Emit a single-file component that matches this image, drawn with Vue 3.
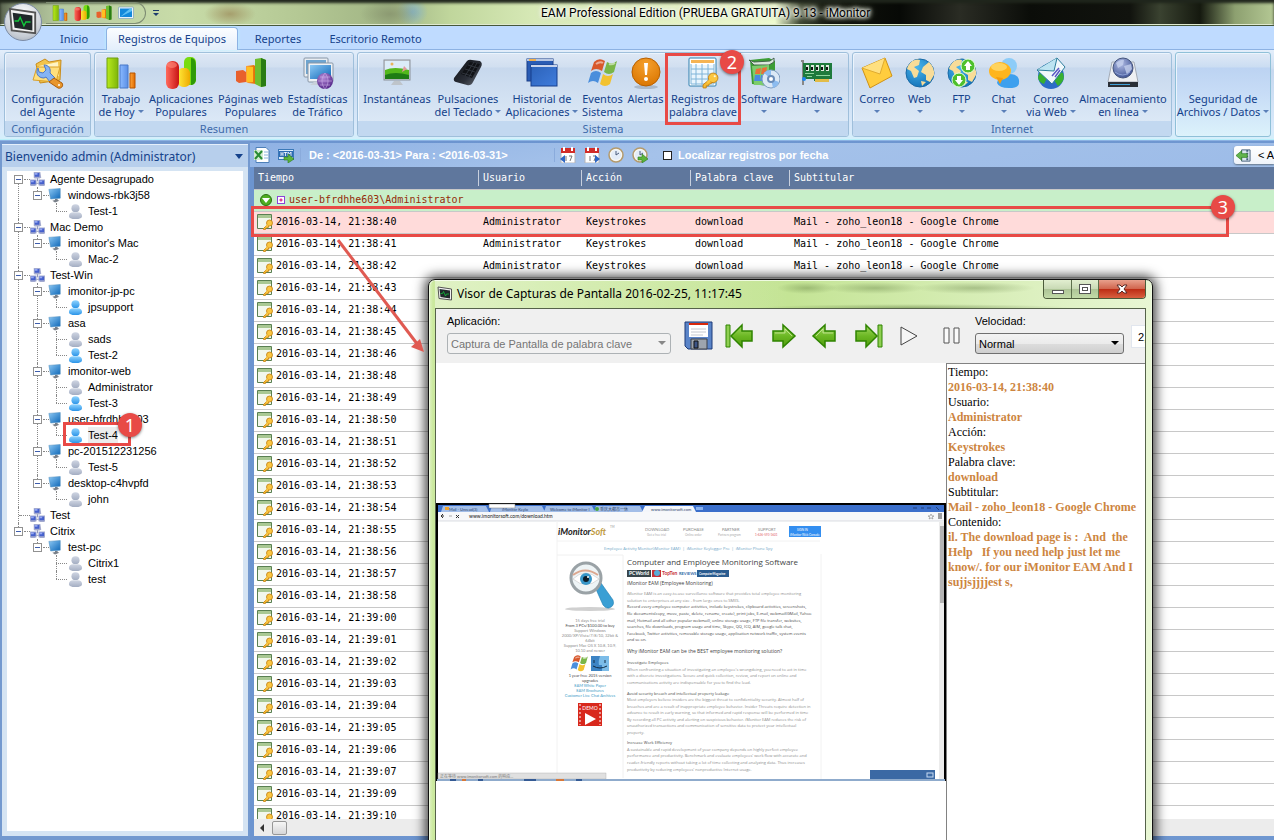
<script setup>
const quickIcons = ['i-bars', 'i-pills', 'i-steps', 'i-desktop']

const tabs = [
  { label: 'Inicio', cls: 'w-inicio' },
  { label: 'Registros de Equipos', cls: 'w-registros', active: true },
  { label: 'Reportes', cls: 'w-reportes' },
  { label: 'Escritorio Remoto', cls: 'w-remoto' }
]

const groups = [
  { label: 'Configuración', cls: 'g1', items: [{ icon: 'i-config', lines: ['Configuración', 'del Agente'], w: 84 }] },
  {
    label: 'Resumen', cls: 'g2', items: [
      { icon: 'i-bars', lines: ['Trabajo', 'de Hoy'], drop: true, w: 48 },
      { icon: 'i-pills', lines: ['Aplicaciones', 'Populares'], w: 72 },
      { icon: 'i-steps', lines: ['Páginas web', 'Populares'], w: 67 },
      { icon: 'i-stats', lines: ['Estadísticas', 'de Tráfico'], w: 67 }
    ]
  },
  {
    label: 'Sistema', cls: 'g3', items: [
      { icon: 'i-snap', lines: ['Instantáneas'], w: 72 },
      { icon: 'i-keyboard', lines: ['Pulsaciones', 'del Teclado'], drop: true, w: 70 },
      { icon: 'i-windows2', lines: ['Historial de', 'Aplicaciones'], drop: true, w: 78 },
      { icon: 'i-win', lines: ['Eventos', 'Sistema'], w: 43 },
      { icon: 'i-alert', lines: ['Alertas'], w: 43 },
      { icon: 'i-gridkey', lines: ['Registros de', 'palabra clave'], w: 72 },
      { icon: 'i-software', lines: ['Software', ''], drop: true, w: 50 },
      { icon: 'i-hardware', lines: ['Hardware', ''], drop: true, w: 56 }
    ]
  },
  {
    label: 'Internet', cls: 'g4', items: [
      { icon: 'i-mail', lines: ['Correo', ''], drop: true, w: 43 },
      { icon: 'i-globe', lines: ['Web', ''], drop: true, w: 42 },
      { icon: 'i-ftp', lines: ['FTP', ''], drop: true, w: 42 },
      { icon: 'i-chat', lines: ['Chat', ''], drop: true, w: 42 },
      { icon: 'i-webmail', lines: ['Correo', 'via Web'], drop: true, w: 53 },
      { icon: 'i-storage', lines: ['Almacenamiento', 'en línea'], drop: true, w: 91 }
    ]
  },
  { label: '', cls: 'g5', items: [{ icon: '', lines: ['Seguridad de', 'Archivos / Datos'], drop: true, w: 94 }] }
]

const tree = [
  { name: 'Agente Desagrupado', computers: [{ name: 'windows-rbk3j58', users: [['Test-1', 0]] }] },
  { name: 'Mac Demo', computers: [{ name: "imonitor's Mac", users: [['Mac-2', 0]] }] },
  {
    name: 'Test-Win', computers: [
      { name: 'imonitor-jp-pc', users: [['jpsupport', 1]] },
      { name: 'asa', users: [['sads', 0], ['Test-2', 1]] },
      { name: 'imonitor-web', users: [['Administrator', 0], ['Test-3', 1]] },
      { name: 'user-bfrdhhe603', users: [['Test-4', 1, 1]] },
      { name: 'pc-201512231256', users: [['Test-5', 0]] },
      { name: 'desktop-c4hvpfd', users: [['john', 0]] }
    ]
  },
  { name: 'Test', computers: [] },
  { name: 'Citrix', computers: [{ name: 'test-pc', users: [['Citrix1', 0], ['test', 0]] }] }
]

const times = ['38:40', '38:41', '38:42', '38:43', '38:44', '38:45', '38:46', '38:48', '38:49', '38:50', '38:51', '38:52', '38:53', '38:54', '38:55', '38:56', '38:57', '38:58', '39:00', '39:01', '39:02', '39:03', '39:04', '39:05', '39:06', '39:07', '39:09', '39:10']

const details = [
  ['Tiempo:', '2016-03-14, 21:38:40'],
  ['Usuario:', 'Administrator'],
  ['Acción:', 'Keystrokes'],
  ['Palabra clave:', 'download'],
  ['Subtitular:', 'Mail - zoho_leon18 - Google Chrome'],
  ['Contenido:', 'il. The download page is :  And  the Help   If you need help just let me know/. for our iMonitor EAM And I sujjsjjjjest s,']
]

const site = [
  [92, 'l', 'iMonitor EAM is an easy-to-use surveillance software that provides total employee monitoring'],
  [99, 'l', 'solution to enterprises at any size - from large ones to SMES.'],
  [105, 'd', 'Record every employee computer activities, include keystrokes, clipboard activities, screenshots,'],
  [112, 'd', 'file documents(copy, move, paste, delete, rename, create), print jobs, E-mail, webmail(GMail, Yahoo'],
  [119, 'd', 'mail, Hotmail and all other popular webmail), online storage usage, FTP file transfer, websites,'],
  [125, 'd', 'searches, file downloads, program usage and time, Skype, QQ, ICQ, AIM, google talk chat,'],
  [132, 'd', 'Facebook, Twitter activities, removable storage usage, application network traffic, system events'],
  [138, 'd', 'and so on.'],
  [161, 'd', 'Investigate Employees'],
  [168, 'l', "When confronting a situation of investigating an employee's wrongdoing, you need to act in time"],
  [174, 'l', 'with a discrete investigations. Secure and quick collection, review, and report on online and'],
  [181, 'l', 'communications activity are indispensable for you to find the lead.'],
  [192, 'd', 'Avoid security breach and intellectual property leakage'],
  [198, 'l', 'Most employers believe insiders are the biggest threat to confidentiality security. Almost half of'],
  [205, 'l', 'breaches and are a result of inappropriate employee behavior. Insider Threats require detection in'],
  [211, 'l', 'advance to result in early warning, so that informed and rapid response will be performed in time'],
  [218, 'l', 'By recording all PC activity and alerting on suspicious behavior. iMonitor EAM reduces the risk of'],
  [224, 'l', 'unauthorized transactions and communication of sensitive data to protect your intellectual'],
  [231, 'l', 'property.'],
  [241, 'd', 'Increase Work Efficiency'],
  [248, 'l', 'A sustainable and rapid development of your company depends on highly perfect employee'],
  [254, 'l', "performance and productivity. Benchmark and evaluate employees' work flow with accurate and"],
  [261, 'l', 'reader-friendly reports without taking a lot of time collecting and analyzing data. Thus increases'],
  [268, 'l', "productivity by reducing employees' nonproductive Internet usage."]
]
const siteSide = [
  [119, 'l', '15 days free trial'], [124, 'd', 'From 3 PCs/$100.00 to buy'], [129, 'l', 'Support Windows'],
  [134, 'l', '2000/XP/Vista/7/8/10, 32bit &'], [139, 'l', '64bit'], [144, 'l', 'Support Mac OS X 10.8, 10.9,'], [149, 'l', '10.10 and newer'],
  [174, 'd', '1 year free 2015 version'], [179, 'd', 'upgrades'], [184, 'b', 'EAM White Paper'], [189, 'b', 'EAM Brochures'], [194, 'b', 'Customer Live Chat Archives']
]
</script>

<template>
  <div class="app">
    <svg class="defs" aria-hidden="true">
      <defs>
        <linearGradient id="gGreen" x1="0" x2="1"><stop offset="0" stop-color="#b8ea1c" /><stop offset="1" stop-color="#7fb60a" /></linearGradient>
        <linearGradient id="gBlue" x1="0" x2="1"><stop offset="0" stop-color="#8ab9ff" /><stop offset="1" stop-color="#5a8fe6" /></linearGradient>
        <linearGradient id="gOrange" x1="0" x2="1"><stop offset="0" stop-color="#ffa53a" /><stop offset="1" stop-color="#e06a00" /></linearGradient>
        <linearGradient id="gRed" x1="0" x2="1"><stop offset="0" stop-color="#ff6a5c" /><stop offset="1" stop-color="#c81414" /></linearGradient>
        <linearGradient id="gYel" x1="0" x2="1"><stop offset="0" stop-color="#ffe93a" /><stop offset="1" stop-color="#eeaa00" /></linearGradient>
        <linearGradient id="gNavy" x1="0" x2="1" y2="1"><stop offset="0" stop-color="#2c62b8" /><stop offset="1" stop-color="#3f7cdc" /></linearGradient>
        <linearGradient id="gScreen" x1="0" x2="1" y2="1"><stop offset="0" stop-color="#8cc8f4" /><stop offset="1" stop-color="#0d67b8" /></linearGradient>
        <linearGradient id="gKeys" x1="0" x2="1" y2="1"><stop offset="0" stop-color="#0c0e12" /><stop offset=".6" stop-color="#2b2f38" /><stop offset="1" stop-color="#6c727c" /></linearGradient>
        <radialGradient id="gAlert" cx=".5" cy=".25" r=".8"><stop offset="0" stop-color="#f5a02c" /><stop offset="1" stop-color="#d97400" /></radialGradient>
        <radialGradient id="gGlobe" cx=".4" cy=".3" r=".8"><stop offset="0" stop-color="#48b4ec" /><stop offset="1" stop-color="#0f6db4" /></radialGradient>
        <radialGradient id="gPurple" cx=".4" cy=".3" r=".8"><stop offset="0" stop-color="#b48ad8" /><stop offset="1" stop-color="#4a1c80" /></radialGradient>
        <radialGradient id="gBall" cx=".4" cy=".3" r=".8"><stop offset="0" stop-color="#b0bce4" /><stop offset="1" stop-color="#34488c" /></radialGradient>
        <linearGradient id="gArrow" x2="0" y2="1"><stop offset="0" stop-color="#a4d864" /><stop offset=".5" stop-color="#6cb824" /><stop offset="1" stop-color="#4f9c0c" /></linearGradient>
        <linearGradient id="gUser" x2="0" y2="1"><stop offset="0" stop-color="#8fd4ff" /><stop offset="1" stop-color="#2a94e8" /></linearGradient>
        <linearGradient id="gUserOff" x2="0" y2="1"><stop offset="0" stop-color="#cfd5e2" /><stop offset="1" stop-color="#a3adc2" /></linearGradient>
      </defs>
      <symbol id="i-bars" viewBox="0 0 32 32"><path d="M2 1h11v30H2z" fill="url(#gGreen)" stroke="#6f9f10" /><path d="M15 8h8v23h-8z" fill="url(#gBlue)" stroke="#4878c8" /><path d="M25 16h5v15h-5z" fill="url(#gOrange)" stroke="#b85400" /></symbol>
      <symbol id="i-pills" viewBox="0 0 32 32"><rect x="19" y="0" width="12" height="28" rx="5" fill="#78dc10" /><path d="M26 1c6 1 5 6 5 22-1 4-3 5-5 5z" fill="#2e9a08" /><rect x="13" y="11" width="12" height="19" rx="5" fill="url(#gYel)" /><rect x="1" y="4" width="13" height="28" rx="6" fill="url(#gRed)" /><ellipse cx="7" cy="8" rx="5" ry="3" fill="#ff8a7c" opacity=".6" /></symbol>
      <symbol id="i-steps" viewBox="0 0 32 32"><path d="M1 14l7-1 3 2v10l-7 1-3-2z" fill="#e8602c" /><path d="M11 9l8-1 2 2v17l-8-1-2-1z" fill="url(#gOrange)" /><path d="M12 10h6v15h-6z" fill="#ffc020" /><path d="M20 2l6-1 5 2v26l-5 1-6-3z" fill="#6fbe30" /><path d="M26 1l5 2v26l-5 1z" fill="#2a7c14" /></symbol>
      <symbol id="i-desktop" viewBox="0 0 32 32"><rect x="1" y="4" width="30" height="23" rx="2" fill="#e8f2fa" stroke="#5d86ac" /><rect x="4" y="7" width="24" height="17" fill="#1389dc" /><path d="M4 24L24 7h4v5z" fill="#5fc0f4" /></symbol>
      <symbol id="i-config" viewBox="0 0 32 32"><path d="M4 7l9-5 4 3 12-2-1 20-20 3z" fill="#f2c44c" stroke="#c98c1c" /><path d="M7 9l19-4 1 14-17 4z" fill="#fff4c4" /><path d="M1 23l4-13 23 0-4 15z" fill="#ffdf7c" stroke="#d9a028" /><path d="M6 11c-3 5 0 10 6 10l2-1 4 5 5-4-5-5c1-4-1-8-6-8l2 5-3 3-4-1z" fill="#86b4f4" stroke="#4c78c8" /><path d="M17 25l5-4 8 5c2 3-1 6-4 5z" fill="#e8962c" stroke="#ac5c08" /><circle cx="27" cy="28" r="1" fill="#fff" /></symbol>
      <symbol id="i-stats" viewBox="0 0 32 32"><rect x="2" y="1" width="24" height="19" rx="1" fill="#e8edf2" stroke="#8896a6" /><rect x="4" y="3" width="20" height="14" fill="#6ea4cf" /><rect x="6" y="6" width="25" height="19" rx="1" fill="#eef2f6" stroke="#8896a6" /><rect x="8" y="8" width="21" height="14" fill="url(#gScreen)" /><path d="M8 28h14l-3-3h-7z" fill="#c9d1da" /><circle cx="23" cy="24" r="8" fill="url(#gPurple)" /><path d="M16 24h14M18 20h10M18 28h10M23 16c-4 5-4 11 0 16M23 16c4 5 4 11 0 16" fill="none" stroke="#cdb0ea" stroke-width=".6" /></symbol>
      <symbol id="i-snap" viewBox="0 0 32 32"><rect x="3" y="3" width="26" height="20" fill="#d4d8dc" stroke="#8b9199" /><rect x="4" y="4" width="24" height="18" fill="#dcecf8" /><path d="M4 13q9-4 24 0v9H4z" fill="#53b81c" /><path d="M4 18q10-4 24 0v4H4z" fill="#1e7c14" /><path d="M23 9l3 3-5 3z" fill="#e29a9a" /><circle cx="11" cy="7" r="1.500" fill="#e8b45c" /><path d="M13 24h6l3 4H10z" fill="#bec4ca" /></symbol>
      <symbol id="i-keyboard" viewBox="0 0 32 32"><path d="M2 21L15 4q2-2 5-1l8 1q3 2 1 6l-8 15q-2 4-6 3L4 25q-3-1-2-4z" fill="url(#gKeys)" /><path d="M9 17L18 5l10 2-8 14z" fill="#101216" /><path d="M10 16l10 3M13 12l10 3M16 8l10 3M13 19l9-14M17 20l8-14" stroke="#3c424c" stroke-width=".7" /></symbol>
      <symbol id="i-windows2" viewBox="0 0 32 32"><rect x="1" y="2" width="26" height="22" fill="#2a5cb4" stroke="#1a3f88" /><path d="M1 2h26v2H1z" fill="#b8c8e4" /><path d="M3 2h7v2H3z" fill="#f0b050" /><rect x="5" y="8" width="26" height="21" fill="url(#gNavy)" stroke="#173f8c" /><path d="M5 8h26v2H5z" fill="#c8d4ec" /></symbol>
      <symbol id="i-win" viewBox="0 0 32 32"><path d="M7 5q5-5 11-1l-3 10q-6-4-11 0z" fill="#d8582c" /><path d="M20 5q5 3 10-1l-3 11q-5 4-10 0z" fill="#7ab648" /><path d="M4 16q5-4 10 0l-3 10q-5-4-10 0z" fill="#4a8edc" /><path d="M16 17q5 4 10 0l-3 10q-5 4-10 0z" fill="#f2c230" /><path d="M9 7q4-3 7-1M22 7q3 1 6-1" fill="none" stroke="#fff" opacity=".5" stroke-width="2" /></symbol>
      <symbol id="i-alert" viewBox="0 0 32 32"><ellipse cx="16" cy="30" rx="12" ry="2" fill="#8895a6" opacity=".5" /><circle cx="16" cy="15" r="14" fill="url(#gAlert)" stroke="#b86000" /><path d="M14 6h4l-1 12h-2z" fill="#fff" /><circle cx="16" cy="22" r="2" fill="#fff" /></symbol>
      <symbol id="key" viewBox="0 0 16 16"><path d="M1 12l6-5 3 3-4 2 0 1-2 0 0 2-3 0z" fill="#f8bc30" stroke="#c07c10" stroke-width=".8" /><circle cx="10.500" cy="5.500" r="4.500" fill="#fbc640" stroke="#c07c10" stroke-width=".8" /><path d="M5 10l4-3" stroke="#fbc640" stroke-width="2" /><circle cx="12" cy="4" r="1" fill="#fff7d8" /></symbol>
      <symbol id="i-gridkey" viewBox="0 0 32 32"><rect x="2" y="1" width="27" height="28" rx="1" fill="#fff" stroke="#2d7eae" /><path d="M4 3h23v3H4z" fill="#f5b454" /><path d="M4 8h23v19H4z" fill="#e9f5fd" /><path d="M4 12h23M4 17h23M4 22h23M4 27h23M9 7v21M15 7v21M21 7v21M27 7v20M4 7v20" stroke="#7fb4d8" /><use href="#key" x="15" y="15" width="17" height="17" /></symbol>
      <symbol id="i-software" viewBox="0 0 32 32"><path d="M2 3l19-2 6 3v21l-6 4-17-2z" fill="#3c9c34" /><path d="M1 3l5 2 16-1 4-3v4l-5 3H6z" fill="#dce8dc" stroke="#44644c" /><path d="M4 9l17-1v20L6 28z" fill="#7ccc6c" /><path d="M8 12l5-1-1 6H7zM14 11l5-1-1 7h-5z" fill="#e87038" /><path d="M7 18h5v6H6zM13 18h5l-1 6h-5z" fill="#4a8ae0" /><circle cx="23" cy="22" r="9" fill="#dbe8f6" stroke="#7c9cc0" /><path d="M23 22L16 16a9 9 0 0 1 7-3zM23 22l8 3a9 9 0 0 1-6 6z" fill="#8cbcf0" /><circle cx="23" cy="22" r="3" fill="#fff" stroke="#6a8cb8" stroke-width="2" /></symbol>
      <symbol id="i-hardware" viewBox="0 0 32 32"><path d="M0 4h2v24" fill="none" stroke="#888" stroke-width="2" /><path d="M2 6h29v16h-5v2H13v-2H2z" fill="#1e7a3c" /><path d="M14 22h14v3H14z" fill="#e2bc48" /><path d="M5 8h3v6H5zM10 8h3v6h-3zM15 8h3v6h-3zM20 8h3v6h-3zM25 8h3v6h-3z" fill="#dfe9df" /><path d="M5 10h2v3H5zM10 10h2v3h-2zM15 10h2v3h-2zM20 10h2v3h-2zM25 10h2v3h-2z" fill="#111" /><path d="M4 16h9v1H4zM15 18h14v1H15zM6 19h5v1H6z" fill="#8cd49c" /><circle cx="3" cy="22" r="2" fill="#1c86f0" /></symbol>
      <symbol id="i-mail" viewBox="0 0 32 32"><path d="M1 11L24 1l7 18L9 31z" fill="#ffcd3e" stroke="#cf9216" /><path d="M1 11l18 6L24 1" fill="#ffe080" stroke="#e0ac30" /></symbol>
      <symbol id="i-globe" viewBox="0 0 32 32"><circle cx="16" cy="16" r="14" fill="url(#gGlobe)" stroke="#1a6aa6" /><path d="M4 9q5-8 12-6l-1 5-5 2 5 4-2 6-3 1-3-7-4-2zM19 10l6-5q6 6 5 13l-4 7-4-2 0-5-5-3z" fill="#f8dc98" /><path d="M17 24l5 1-4 4z" fill="#f8dc98" /></symbol>
      <symbol id="i-ftp" viewBox="0 0 32 32"><use href="#i-globe" /><circle cx="22" cy="9" r="7" fill="#4ec02c" stroke="#e8ffe0" /><path d="M22 4l4 5h-2v4h-4V9h-2z" fill="#fff" /><circle cx="13" cy="23" r="7" fill="#4ec02c" stroke="#e8ffe0" /><path d="M13 28l4-5h-2v-4h-4v4H9z" fill="#fff" /></symbol>
      <symbol id="i-chat" viewBox="0 0 32 32"><circle cx="21" cy="9" r="8" fill="#8cccf8" /><path d="M9 26q1-9 12-9t10 9q0 5-10 5T9 26z" fill="#3da0ee" /><ellipse cx="12" cy="14" rx="11" ry="9" fill="#ffb51c" /><path d="M8 20l4 7 3-6z" fill="#f59c0c" /><ellipse cx="11" cy="10" rx="8" ry="4" fill="#ffe078" opacity=".7" /></symbol>
      <symbol id="i-webmail" viewBox="0 0 32 32"><circle cx="16" cy="19" r="13" fill="#2c6cc8" /><path d="M3 20q2-8 9-9l2 6-5 10q-6-2-6-7zM21 14l7 2q3 8-5 13l-4-6z" fill="#38b030" /><path d="M2 13L22 1l8 9-13 17z" fill="#f0f8fc" stroke="#2d7d9c" /><path d="M2 13l17 1L22 1" fill="#bde4f2" stroke="#2d7d9c" /><path d="M17 19l7-8M20 20l5-7" stroke="#5a58c4" stroke-width="1.500" /></symbol>
      <symbol id="i-storage" viewBox="0 0 32 32"><path d="M5 5h22l4 20H1z" fill="#eef0f3" stroke="#a4abb6" /><path d="M1 25h30v5H1z" fill="#2a2f37" /><path d="M3 27h20v1H3z" fill="#3fa0d8" /><circle cx="16" cy="11" r="10" fill="url(#gBall)" stroke="#44547c" /><path d="M9 6q5-4 8-3l-1 5-5 3zM17 9l7-2 1 5-5 6z" fill="#c4d0ec" opacity=".8" /><path d="M8 15q8 6 15 0" fill="none" stroke="#8ca0d4" /></symbol>

      <symbol id="t-group" viewBox="0 0 16 16"><path d="M8 6v4M4 12h8" stroke="#8c93b4" /><path d="M4 0h7l1 6-2 1H5L4 6zM0 8h7v6l-2 1H1l-1-1zM9 8h7v6l-1 1h-4l-2-1z" fill="#a4abcf" /><path d="M5 1h5v4H5zM1 9h5v4H1zM10 9h5v4h-5z" fill="#4560cc" /><path d="M5 1h3v2H5zM1 9h3v2H1zM10 9h3v2h-3z" fill="#93a6f2" /></symbol>
      <symbol id="t-pc" viewBox="0 0 16 16"><path d="M1 1l13-1v11l-11 1z" fill="url(#gScreen)" stroke="#4d8cbc" stroke-width=".6" /><path d="M8 12h3v1l2 1-5 2-3-2 3-1z" fill="#787f88" /></symbol>
      <symbol id="t-on" viewBox="0 0 16 16"><circle cx="8" cy="4.500" r="4.300" fill="url(#gUser)" /><path d="M1 13q0-5 7-4 7-1 7 4 0 3-7 3t-7-3z" fill="url(#gUser)" /></symbol>
      <symbol id="t-off" viewBox="0 0 16 16"><circle cx="8" cy="4.500" r="4.300" fill="url(#gUserOff)" /><path d="M1 13q0-5 7-4 7-1 7 4 0 3-7 3t-7-3z" fill="url(#gUserOff)" /></symbol>
      <symbol id="r-row" viewBox="0 0 16 16"><path d="M.5 .5h14v14H.5z" fill="#f2f7ec" stroke="#5a8052" /><path d="M1 1h13v3H1z" fill="#a9c893" /><path d="M6 15l4-4 2 2-3 1-1 2z" fill="#f8bc30" stroke="#c07c10" stroke-width=".8" /><circle cx="12.500" cy="9" r="3" fill="#fbc640" stroke="#c07c10" stroke-width=".8" /><path d="M9 13l2-2" stroke="#fbc640" stroke-width="2" /></symbol>
      <symbol id="b-excel" viewBox="0 0 16 16"><path d="M4 .5h8l3 3v12H2V.5z" fill="#fff" stroke="#4d7fb8" /><path d="M10 5h4M10 8h4M10 11h4" stroke="#8cb4dc" /><path d="M0 3h9v10H0z" fill="#d4ecd4" /><path d="M1 4l7 8M8 4l-7 8" stroke="#2a8c34" stroke-width="2" /></symbol>
      <symbol id="b-html" viewBox="0 0 16 16"><rect x=".5" y="2.500" width="15" height="10" fill="#dcebfb" stroke="#3a78b8" /><path d="M1 4h14v6H1z" fill="#2e6cb4" /><path d="M3 5v4M5 5v4M3 7h2M6 5.500h3M7.500 5v4M10 9V5l1.500 2L13 5v4" stroke="#fff" fill="none" stroke-width=".8" /><path d="M6 10h4V7l6 5-6 4v-3H6z" fill="#5cb43c" stroke="#2c7c1c" stroke-width=".6" /></symbol>
      <symbol id="b-cal" viewBox="0 0 16 16"><path d="M1 5h14v11H1z" fill="#fff" stroke="#b4b4b8" /><path d="M1 1h14v5H1z" fill="#d22c28" /><path d="M4 0v4M12 0v4" stroke="#fff" stroke-width="2" /><path d="M6 9v5M9 9h3l-2 5" stroke="#777" fill="none" /></symbol>
      <symbol id="b-prev" viewBox="0 0 16 16"><use href="#b-cal" /><path d="M0 12l5-4v8z" fill="#2d66c4" /></symbol>
      <symbol id="b-next" viewBox="0 0 16 16"><use href="#b-cal" /><path d="M16 12l-5-4v8z" fill="#2d66c4" /></symbol>
      <symbol id="b-clock" viewBox="0 0 16 16"><circle cx="8" cy="8" r="7" fill="#f8f8f4" stroke="#b49a6c" stroke-width="1.500" /><circle cx="8" cy="8" r="5" fill="#e4edf8" /><path d="M8 4v4l3-2" stroke="#4a5c7c" fill="none" /></symbol>
      <symbol id="b-clockgo" viewBox="0 0 16 16"><use href="#b-clock" /><path d="M6 10h4V7l6 5-6 4v-3H6z" fill="#5cb43c" stroke="#2c7c1c" stroke-width=".6" /></symbol>
      <symbol id="p-arrow" viewBox="0 0 26 26"><path d="M2 8h10V2l12 11-12 11v-6H2z" fill="url(#gArrow)" stroke="#2f8400" stroke-width="1.500" /><path d="M4 10h10V6l7 7" fill="none" stroke="#d5f0ac" opacity=".7" /></symbol>
      <symbol id="logo" viewBox="0 0 32 32"><path d="M2 2l27 4v22L4 25z" fill="#f2f2f2" stroke="#555" stroke-width="2" /><path d="M5 6l21 3v16L7 22z" fill="#20282a" /><path d="M7 15h4l2-4 4 9 2-4h5" fill="none" stroke="#12c83c" stroke-width="1.500" /></symbol>
    </svg>

    <header class="titlebar">
      <div class="quick">
        <button v-for="q in quickIcons" :key="q" class="qbtn" :aria-label="q.slice(2)"><svg><use :href="'#' + q" /></svg></button>
      </div>
      <button class="qmore" aria-label="Personalizar"><i></i><b></b></button>
      <h1>EAM Professional Edition (PRUEBA GRATUITA) 9.13 - iMonitor</h1>
    </header>
    <button class="orb" aria-label="Menú"><svg><use href="#logo" /></svg></button>

    <nav class="tabs">
      <a v-for="t in tabs" :key="t.label" href="#" :class="['tab', t.cls, { active: t.active }]">{{ t.label }}</a>
    </nav>

    <section class="ribbon">
      <div v-for="g in groups" :key="g.cls" :class="['group', g.cls]">
        <div class="items">
          <button v-for="it in g.items" :key="it.lines.join()" class="rbtn" :style="{ width: it.w + 'px' }">
            <svg class="ico"><use v-if="it.icon" :href="'#' + it.icon" /></svg>
            <span v-for="(l, i) in it.lines" :key="i" class="ln">{{ l }}<i v-if="it.drop && i === it.lines.length - 1" :class="['caret', { solo: !l }]"></i></span>
          </button>
        </div>
        <div v-if="g.label" class="glabel">{{ g.label }}</div>
      </div>
    </section>

    <div class="work">
      <aside class="side">
        <div class="side-head"><span>Bienvenido admin (Administrator)</span><i class="dn"></i></div>
        <div class="tree">
          <ul>
            <li v-for="g in tree" :key="g.name" class="l0">
              <div class="node n0"><span :class="['exp', { none: !g.computers.length }]"></span><svg><use href="#t-group" /></svg><span class="nm">{{ g.name }}</span></div>
              <ul v-if="g.computers.length">
                <li v-for="c in g.computers" :key="c.name" class="l1">
                  <div class="node n1"><span class="exp"></span><svg><use href="#t-pc" /></svg><span class="nm">{{ c.name }}</span></div>
                  <ul>
                    <li v-for="u in c.users" :key="u[0]" class="l2">
                      <div class="node n2"><svg><use :href="u[1] ? '#t-on' : '#t-off'" /></svg><span :class="['nm', { sel: u[2] }]">{{ u[0] }}</span></div>
                    </li>
                  </ul>
                </li>
              </ul>
            </li>
          </ul>
        </div>
      </aside>

      <main class="main">
        <div class="bar">
          <button class="tb" aria-label="Excel"><svg><use href="#b-excel" /></svg></button>
          <button class="tb html" aria-label="HTML"><svg><use href="#b-html" /></svg></button>
          <span class="range">De : &lt;2016-03-31&gt; Para : &lt;2016-03-31&gt;</span>
          <div class="dates">
            <button class="tb" aria-label="Anterior"><svg><use href="#b-prev" /></svg></button>
            <button class="tb" aria-label="Siguiente"><svg><use href="#b-next" /></svg></button>
            <button class="tb" aria-label="Hora"><svg><use href="#b-clock" /></svg></button>
            <button class="tb" aria-label="Ir a hora"><svg><use href="#b-clockgo" /></svg></button>
          </div>
          <label class="find"><input type="checkbox" />Localizar registros por fecha</label>
          <button class="prev"><svg viewBox="0 0 16 16"><path d="M6 2h9v12H6z" fill="#dbe6f0" stroke="#44607c" /><path d="M12 2v12" stroke="#44607c" stroke-dasharray="2 1" stroke-width="2" /><path d="M0 8l6-5v3h6v4H6v3z" fill="#62b44c" stroke="#2d7c20" stroke-width=".7" /></svg>&lt; A</button>
        </div>
        <div class="grid">
          <table>
            <thead>
              <tr><th class="c1">Tiempo</th><th class="c2">Usuario</th><th class="c3">Acción</th><th class="c4">Palabra clave</th><th>Subtitular</th></tr>
            </thead>
            <tbody>
              <tr class="grp"><td colspan="5"><svg class="chev" viewBox="0 0 12 12"><circle cx="6" cy="6" r="5.500" fill="#4fae20" stroke="#2b7010" /><path d="M2 4h8l-4 5z" fill="#fff" /></svg><i class="sq"></i>user-bfrdhhe603\Administrator</td></tr>
              <tr v-for="(t, i) in times" :key="t" :class="{ hot: i === 0 }">
                <td><svg class="rowi"><use href="#r-row" /></svg>2016-03-14, 21:{{ t }}</td><td>Administrator</td><td>Keystrokes</td><td>download</td><td>Mail - zoho_leon18 - Google Chrome</td>
              </tr>
            </tbody>
          </table>
        </div>
        <div class="hscroll"><i class="la"></i><i class="thumb"></i></div>
      </main>
    </div>

    <section class="popup" role="dialog" aria-label="Visor de Capturas de Pantalla">
      <div class="ptitle">
        <svg><use href="#logo" /></svg>
        <h2>Visor de Capturas de Pantalla 2016-02-25, 11:17:45</h2>
        <div class="wbtns">
          <button class="wmin" aria-label="Minimizar"><i></i></button>
          <button class="wmax" aria-label="Maximizar"><i></i></button>
          <button class="wclose" aria-label="Cerrar"><svg viewBox="0 0 12 10"><path d="M1 1h3l2 2 2-2h3L8 5l3 4H8L6 7 4 9H1l3-4z" fill="#fff" stroke="#5a2c28" /></svg></button>
        </div>
      </div>
      <div class="pbody">
        <div class="ptools">
          <div class="field app-field">
            <label for="appsel">Aplicación:</label>
            <div class="selwrap off"><select id="appsel" disabled><option>Captura de Pantalla de palabra clave</option></select></div>
          </div>
          <button class="pt save" aria-label="Guardar"><svg viewBox="0 0 30 30"><path d="M1 1h27v27H4l-3-3z" fill="#5a84c8" stroke="#1d3a78" /><path d="M5 2h19v14H5z" fill="#fff" /><path d="M5 2h19v2H5z" fill="#d8280c" /><path d="M7 8h15M7 11h15M7 14h12" stroke="#c4c8d0" /><path d="M7 18h16v10H7z" fill="#9da4ae" stroke="#3c4048" /><path d="M10 20h4v7h-4z" fill="#3d5484" stroke="#111" /></svg></button>
          <button class="pt first" aria-label="Primero"><svg viewBox="0 0 28 26"><path d="M1 2h4v22H1z" fill="#8fcf52" stroke="#2f8400" /><path d="M27 8H17V2L6 13l11 11v-6h10z" fill="url(#gArrow)" stroke="#2f8400" stroke-width="1.500" /></svg></button>
          <button class="pt next" aria-label="Siguiente"><svg><use href="#p-arrow" /></svg></button>
          <button class="pt back" aria-label="Anterior"><svg class="flip"><use href="#p-arrow" /></svg></button>
          <button class="pt last" aria-label="Último"><svg class="flip" viewBox="0 0 28 26"><path d="M1 2h4v22H1z" fill="#8fcf52" stroke="#2f8400" /><path d="M27 8H17V2L6 13l11 11v-6h10z" fill="url(#gArrow)" stroke="#2f8400" stroke-width="1.500" /></svg></button>
          <button class="pt play" aria-label="Reproducir"><svg viewBox="0 0 20 22"><path d="M2 2l16 9-16 9z" fill="#f6f6f6" stroke="#444" /></svg></button>
          <button class="pt pause" aria-label="Pausa"><svg viewBox="0 0 18 18"><path d="M1 1h5v15H1zM11 1h5v15h-5z" fill="#fbfbfb" stroke="#555" /></svg></button>
          <div class="field speed">
            <label for="spd">Velocidad:</label>
            <div class="selwrap"><select id="spd"><option>Normal</option></select></div>
          </div>
          <span class="secs">2,</span>
        </div>
        <div class="pcontent">
          <div class="shot">
            <svg viewBox="0 0 510 278">
              <rect width="510" height="278" fill="#000" />
              <rect x="2" y="2" width="506" height="274" fill="#fff" />
              <rect x="2" y="2" width="506" height="7" fill="#3b6fcb" />
              <path d="M5 9l2-6h43l3 6zM54 9l2-6h50l3 6zM108 9l2-6h46l3 6zM158 9l2-6h44l3 6z" fill="#a3bee8" />
              <path d="M206 9l3-6h48l3 6z" fill="#f4f6fa" /><path d="M260 4h7v3h-7z" fill="#8bb2ee" />
              <rect x="53" y="1" width="26" height="4" fill="#fff" stroke="#777" stroke-width=".5" />
              <g class="s4" fill="#31486c"><text x="13" y="8">Mail - Unread(3)</text><text x="66" y="8">iMonitor Keylo</text><text x="114" y="8">Welcome to iMonitor I</text><text x="164" y="8">重庆大都市一休</text><text x="215" y="8">www.imonitorsoft.com</text></g>
              <path d="M9 4h4v3H9z" fill="#f1a32c" /><circle cx="161" cy="6" r="2" fill="#48a840" />
              <rect x="2" y="9" width="506" height="9" fill="#f7f8fa" /><path d="M2 18h506" stroke="#ccd0d6" stroke-width=".7" />
              <path d="M8 13H5l2-2M5 13l2 2M20 12l3 3M23 12l-3 3" stroke="#333" fill="none" /><path d="M13 13h3" stroke="#aaa" />
              <text class="s5" x="33" y="15" fill="#222">www.imonitorsoft.com/download.htm</text>
              <path d="M495 11l1 2h2l-2 1 1 2-2-1-2 1 1-2-2-1h2z" fill="none" stroke="#777" stroke-width=".5" /><path d="M502 11h4M502 13h4M502 15h4" stroke="#444" />
              <path d="M477 5h4M485 5h3M491 5h4M500 4l3 3" stroke="#203f78" />
              <rect x="503" y="19" width="5" height="257" fill="#ececec" /><rect x="504" y="23" width="4" height="77" fill="#b4b4b4" />
              <path d="M121 18v257M121 38h263M385 51v225" stroke="#f2f2f2" fill="none" /><path d="M121 52h66v223" stroke="#f0f0f0" fill="none" />
              <text class="logo-t" x="122" y="32">iMonitor<tspan fill="#c09a42">Soft</tspan></text><text class="s3" x="174" y="25" fill="#999">TM</text>
              <g class="s4" fill="#888"><text x="209" y="28">DOWNLOAD</text><text x="247" y="28">PURCHASE</text><text x="286" y="28">PARTNER</text><text x="322" y="28">SUPPORT</text></g>
              <g class="s3" fill="#aaa"><text x="211" y="33">Get a free trial</text><text x="249" y="33">Online order</text><text x="282" y="33">Partners program</text><text x="319" y="33" fill="#e05a64">1-626-593-1601</text></g>
              <rect x="353" y="23" width="32" height="11" fill="#338ef0" />
              <g class="s3" fill="#fff"><text x="361" y="28">SIGN IN</text><text x="354" y="33">iMonitor Web Console</text></g>
              <text class="s4 wide" x="168" y="47" fill="#6ba4c6">Employee Activity Monitor(iMonitor EAM)  &#160;|&#160;  iMonitor Keylogger Pro  &#160;|&#160;  iMonitor Phone Spy</text>
              <text class="s8" x="191" y="62" fill="#444">Computer and Employee Monitoring Software</text>
              <rect x="191" y="67" width="24" height="7" fill="#38464c" /><rect x="216" y="67" width="9" height="7" fill="#c83238" /><circle cx="221" cy="70" r="3" fill="#58acd8" /><rect x="261" y="67" width="32" height="7" fill="#2a5c90" />
              <g class="s5" font-weight="bold"><text x="193" y="72" fill="#fff">PCWorld</text><text x="226" y="72" fill="#c8323a">TopTen</text></g>
              <g class="s4" font-weight="bold"><text x="243" y="72" fill="#2d65a4">REVIEWS</text></g>
              <text class="s3" x="263" y="72" fill="#fff" font-weight="bold">ComputerMagazine</text>
              <text class="s5 wide" x="191" y="82" fill="#444">iMonitor EAM (Employee Monitoring)</text>
              <text class="s5 wide" x="191" y="150" fill="#444">Why iMonitor EAM can be the BEST employee monitoring solution?</text>
              <text v-for="s in site" :key="s[0]" x="191" :y="s[0]" :class="['s4', 'wide', s[1]]">{{ s[2] }}</text>
              <text v-for="s in siteSide" :key="s[0]" x="154" :y="s[0]" :class="['s4', 'mid', s[1]]">{{ s[2] }}</text>
              <ellipse cx="154" cy="106" rx="25" ry="2" fill="#d0d0d0" />
              <path d="M159 84l6-4 12 17q2 6-4 8-3 1-6-3z" fill="#3a9fd4" stroke="#1f7cb0" stroke-width=".6" />
              <circle cx="150" cy="75" r="15" fill="#eef4f6" stroke="#9aa2a6" stroke-width="3" /><path d="M137 76q12-12 26 0-13 11-26 0z" fill="#fff" stroke="#bbb" stroke-width=".5" /><path d="M137 72q12-9 25 0" fill="none" stroke="#dca890" stroke-width="2" />
              <circle cx="150" cy="76" r="6" fill="#3796c8" /><circle cx="150" cy="76" r="3" fill="#0c1c28" /><circle cx="152" cy="74" r="1" fill="#fff" />
              <use href="#i-win" x="134" y="151" width="19" height="19" />
              <rect x="155" y="153" width="18" height="15" fill="#7cbce8" /><path d="M155 153h9q-2 6-1 9h3q0 4 0 6h-11z" fill="#3d84c4" /><path d="M158 157v3M169 157v3M157 163q7 4 14 0" stroke="#132c44" fill="none" />
              <rect x="142" y="200" width="24" height="23" fill="#d8281c" /><path d="M144 201v21M164 201v21" stroke="#fff" stroke-dasharray="2 2" /><path d="M149 210l11 6-11 6z" fill="#fff" /><text class="s5" x="154" y="207" fill="#fff" text-anchor="middle">DEMO</text>
              <rect x="434" y="267" width="65" height="9" fill="#3b69a4" /><rect x="491" y="270" width="6" height="4" fill="none" stroke="#c8dcf4" />
              <rect x="2" y="270" width="168" height="6" fill="#e0e0e0" stroke="#aaa" stroke-width=".4" /><text class="s4" x="4" y="275" fill="#777">正在等待 www.imonitorsoft.com 的响应...</text>
              <rect x="1" y="276" width="508" height="2" fill="#8fabcc" /><path d="M14 277h6M42 277h5M88 277h12M140 277h6" stroke="#345a94" stroke-width="2" /><path d="M26 277h4M120 277h8" stroke="#d87838" stroke-width="2" />
            </svg>
          </div>
          <dl class="details">
            <template v-for="d in details" :key="d[0]"><dt>{{ d[0] }}</dt><dd>{{ d[1] }}</dd></template>
          </dl>
        </div>
      </div>
    </section>

    <div class="mark m1"></div><div class="mark m2"></div><div class="mark m3"></div>
    <svg class="pointer" viewBox="0 0 100 120"><path d="M8 7L88 112" stroke="#e05a52" stroke-width="3" /><path d="M94 119l-13-5 9-8z" fill="#e05a52" /></svg>
    <span class="badge b1">1</span><span class="badge b2">2</span><span class="badge b3">3</span>
  </div>
</template>

<style>
html, body { margin: 0; height: 100%; }
#app { height: 100%; }
</style>

<style scoped>
* { box-sizing: border-box; }
button { border: 0; padding: 0; margin: 0; background: none; font: inherit; color: inherit; }
ul, dl, dd, h1, h2 { margin: 0; padding: 0; list-style: none; }
svg { display: block; flex: none; }
.defs { position: absolute; width: 0; height: 0; }
.app { position: relative; height: 100vh; min-height: 500px; overflow: hidden; display: flex; flex-direction: column; background: #bfdbff; font: 11px/13px "Noto Sans", "Open Sans", sans-serif; color: #15428b; }

.titlebar { flex: none; height: 26px; display: flex; align-items: center; padding-left: 46px; border-bottom: 1px solid #46583a; box-shadow: inset 0 3px 3px #20261c, inset 0 -1px 0 #dfe9cf;
  background: radial-gradient(ellipse 26px 12px at 230px 14px, #a69f6d, transparent), radial-gradient(ellipse 30px 14px at 390px 14px, #8c9a72, transparent), radial-gradient(ellipse 16px 14px at 412px 12px, #86b4c8, transparent), linear-gradient(90deg, #59634f 0, #91a080 20px, #b7caa0 60px, #c8dca8 180px, #b4c894 300px, #a0b484 390px, #c0d69c 450px, #d8eab8 540px, #e8f4c8 700px, #eefad0 775px, #404834 800px, #10130c 830px, #070906 900px, #2a2c24 960px, #0b0d09 1030px, #11130e 1130px, #3a4230 1160px, #15190f 1200px, #8da070 1235px, #b4c894 1274px); }
.quick { display: flex; gap: 6px; align-items: center; width: 100px; height: 22px; padding: 0 6px; border: 1px solid #7d8b72; border-left: 0; border-radius: 0 11px 11px 0; }
.qbtn svg { width: 16px; height: 16px; }
.qmore { margin-left: 6px; width: 8px; }
.qmore i { display: block; height: 1px; width: 6px; background: #1d3c6c; margin: 0 auto 2px; }
.qmore b { display: block; border: 3px solid transparent; border-top-color: #1d3c6c; border-bottom: 0; width: 0; margin: auto; }
h1 { flex: 1; margin-left: 381px; white-space: nowrap; font: 12px/16px Roboto, "Noto Sans", sans-serif; color: #000; text-shadow: 0 0 3px #fff, 0 0 4px #fff, 0 0 5px #eef4e0, 0 0 6px #dde8c8, 0 0 8px #cbd5bb; }
.orb { position: absolute; left: 4px; top: 3px; width: 38px; height: 38px; border-radius: 50%; border: 1px solid #7c8ba4; background: radial-gradient(circle at 50% 30%, #fff, #c6ccd4 70%, #9aa4b2); z-index: 2; }
.orb svg { width: 30px; height: 30px; margin: 3px; }

.tabs { flex: none; display: flex; height: 23px; padding: 1px 0 0 44px; }
.tab { display: block; height: 23px; line-height: 23px; text-align: center; color: #15428b; text-decoration: none; position: relative; }
.w-inicio { width: 60px; margin-right: 2px; }
.w-registros { width: 132px; }
.w-reportes { width: 80px; }
.w-remoto { width: 115px; }
.tab.active { background: linear-gradient(#fbfdff, #e3eefb); border: 1px solid #8db2e3; border-bottom: 0; border-radius: 4px 4px 0 0; line-height: 22px; box-shadow: 0 0 3px #b8f4ff; z-index: 1; }

.ribbon { flex: none; height: 92px; display: flex; gap: 3px; padding: 2px 3px 3px 4px; background: linear-gradient(#e3eefb, #cfdff1 18px, #c6d8ef 20px, #d9eafb 80px, #d4f0fb); border: 1px solid #8db2e3; border-width: 1px 0; box-shadow: inset 0 -1px #b9f0fa; }
.group { display: flex; flex-direction: column; border: 1px solid #9fbfdb; border-radius: 3px; box-shadow: inset 1px 1px #ebf4fd; background: linear-gradient(#dee8f5, #d1dff0 14px, #c7d8ed 15px, #dbe8f6 68px); overflow: hidden; flex: none; }
.g1 { width: 87px; } .g2 { width: 260px; } .g3 { width: 492px; } .g4 { width: 320px; } .g5 { width: 96px; }
.g5 { background: linear-gradient(#dfe9f6, #cbddf2 14px, #bcd3f2 15px, #c7dcf6 40px, #dcf2fb); border-color: #8fc0d8; }
.items { flex: 1; min-height: 0; display: flex; justify-content: center; padding-top: 4px; }
.rbtn { display: flex; flex-direction: column; align-items: center; justify-content: flex-start; flex: none; height: 62px; white-space: nowrap; color: #15428b; }
.ico { width: 32px; height: 32px; margin-bottom: 3px; }
.ln { display: flex; align-items: center; justify-content: center; height: 13px; }
.caret { display: block; border: 3px solid transparent; border-top-color: #5a7fb8; border-bottom: 0; margin-left: 3px; }
.caret.solo { margin-left: 0; }
.glabel { flex: none; height: 15px; line-height: 15px; text-align: center; background: #c2d8f0; color: #3e6aaa; }

.work { flex: 1; min-height: 0; display: flex; background: #6f97d0; }
.side { width: 250px; flex: none; border: 2px solid #7399cf; border-top-width: 3px; border-bottom-width: 4px; background: #d5e4f3; display: flex; flex-direction: column; padding: 0 5px 5px; }
.side-head { height: 23px; margin: 0 -5px 4px; padding: 0 5px 0 3px; display: flex; align-items: center; justify-content: space-between; background: #b7cfec; border-top: 1px solid #e4effb; font-size: 12px; }
.dn { border: 4px solid transparent; border-top: 5px solid #15428b; border-bottom: 0; }
.tree { flex: 1; background: #fff; padding-left: 7px; color: #000; font: 11px/16px "Liberation Sans", Arial, sans-serif; overflow: hidden; }
li { position: relative; }
.node { display: flex; align-items: center; height: 16px; white-space: nowrap; }
.node svg { width: 15px; height: 15px; margin-right: 5px; }
.n1 svg { width: 14px; margin-right: 6px; }
.exp { width: 9px; height: 9px; border: 1px solid #919191; background: linear-gradient(#3e5dac, #3e5dac) center / 5px 1px no-repeat, #fff; margin-right: 7px; position: relative; z-index: 1; }
.exp.none { border-color: transparent; background: linear-gradient(90deg, transparent 50%, #999 50%) 4px 3px / 2px 1px no-repeat; }
.exp::after { content: ""; position: absolute; left: 9px; top: 3px; width: 6px; border-top: 1px dotted #888; }
.exp.none::after { left: 4px; width: 11px; }
.n1 { padding-left: 19px; }
.n1 .exp { margin-right: 6px; }
.n2 { padding-left: 54px; }
.l0::before, .l1::before, .l2::before { content: ""; position: absolute; top: 0; bottom: 0; border-left: 1px dotted #888; }
.l0::before { left: 4px; }
.l0:first-child::before { top: 8px; }
.l0:last-child::before { bottom: auto; height: 8px; }
.l1::before { left: 23px; }
.l1:last-child::before { bottom: auto; height: 8px; }
.l2::before { left: 42px; }
.l2:last-child::before { bottom: auto; height: 8px; }
.l2::after { content: ""; position: absolute; left: 42px; top: 8px; width: 11px; border-top: 1px dotted #888; }
.sel { background: #ececec; }

.main { flex: 1; min-width: 0; display: flex; flex-direction: column; padding: 2px 0 4px 4px; background: linear-gradient(90deg, #6c94cf, #6f97d0); }
.bar { flex: none; height: 24px; margin-left: -4px; padding-left: 4px; display: flex; align-items: center; background: linear-gradient(170deg, #8fb2e4, #a5c2ea 40%, #9dbce8); color: #fff; font: bold 11px/14px "Liberation Sans", Arial, sans-serif; white-space: nowrap; overflow: hidden; }
.tb svg { width: 16px; height: 16px; }
.html { margin-left: 8px; }
.range { margin-left: 6px; padding-left: 8px; width: 255px; border-left: 1px solid #8aabdc; border-right: 1px solid #8aabdc; }
.dates { display: flex; gap: 8px; margin-left: 5px; }
.find { display: flex; align-items: center; margin-left: 15px; flex: 1; }
.find input { appearance: none; width: 9px; height: 9px; border: 1px solid #222; background: #fff; margin: 0 6px 0 0; }
.prev { display: flex; align-items: center; gap: 7px; width: 40px; height: 18px; padding-left: 2px; background: linear-gradient(#fff, #eef3fa); border-radius: 3px 0 0 3px; color: #000; font-weight: 400; box-shadow: 0 1px 2px #678; }
.prev svg { width: 15px; height: 15px; }
.grid { flex: 1; min-height: 0; overflow: hidden; background: #fff; }
table { width: 100%; border-collapse: collapse; table-layout: fixed; font: 10px/12px "DejaVu Sans Mono", "Liberation Mono", monospace; color: #000; }
th, td { height: 22px; padding: 0 0 0 4px; text-align: left; font-weight: 400; white-space: nowrap; border-bottom: 1px solid #c8c8c8; overflow: hidden; }
th { background: linear-gradient(90deg, #c8d0de, #c8d0de) right center / 1px 16px no-repeat, #5f779d; color: #fff; }
th:last-child { background: #5f779d; }
.c1 { width: 225px; } .c2 { width: 103px; } .c3 { width: 109px; } .c4 { width: 99px; }
td svg, .sq { display: inline-block; vertical-align: middle; }
.rowi { width: 16px; height: 16px; margin: 0 3px 0 -1px; }
.grp td { background: #c8efc9; color: #932c0a; }
.hot td { background: #ffdbda; }
.chev { width: 12px; height: 12px; margin: 0 5px 0 2px; }
.sq { width: 8px; height: 8px; border: 1px solid #8a44d8; background: radial-gradient(#e04090 1px, #fff 2px); margin-right: 4px; }
.hscroll { flex: none; height: 17px; display: flex; align-items: center; background: #ececec; padding-left: 6px; }
.la { border: 4px solid transparent; border-right-color: #333; border-left: 0; }
.thumb { width: 15px; height: 14px; border: 1px solid #979797; border-radius: 2px; margin-left: 8px; background: linear-gradient(#f6f6f6, #d6d6d8); }

.popup { position: absolute; left: 428px; top: 279px; bottom: -10px; width: 725px; padding: 0 6px; border: 1px solid #111; border-radius: 7px 7px 0 0; background: linear-gradient(90deg, #dff2c4, #cbe99e 4px, #c4e495 50%, #e8f6d4); box-shadow: 0 0 12px 3px rgba(0, 0, 0, .75), inset 0 0 0 1px #effae0; display: flex; flex-direction: column; color: #000; }
.ptitle { flex: none; height: 28px; display: flex; align-items: center; padding-left: 2px; background: radial-gradient(ellipse 30px 6px at 372px 8px, rgba(60, 90, 30, .3), transparent), radial-gradient(ellipse 50px 6px at 440px 8px, rgba(60, 90, 30, .3), transparent), radial-gradient(ellipse 60px 6px at 540px 8px, rgba(60, 90, 30, .3), transparent), radial-gradient(ellipse 160px 4px at 480px 28px, rgba(60, 90, 30, .4), transparent), linear-gradient(90deg, rgba(255, 255, 255, .4), transparent 50%); }
.ptitle svg { width: 16px; height: 16px; }
h2 { flex: 1; font-size: 12px; line-height: 16px; font-weight: 400; margin-left: 4px; }
.wbtns { align-self: flex-start; display: flex; height: 19px; border: 1px solid #4b5b3a; border-top: 0; border-radius: 0 0 4px 4px; overflow: hidden; }
.wbtns button { display: flex; align-items: center; justify-content: center; height: 18px; border-right: 1px solid #5d704c; background: linear-gradient(#e2efd0, #c8d9b4 50%, #adc496 51%, #c2dba8); }
.wmin { width: 28px; } .wmax { width: 27px; }
.wmin i { width: 12px; height: 4px; background: #fff; border: 1px solid #555; margin-top: 5px; }
.wmax i { width: 12px; height: 10px; border: 1px solid #555; background: #fff; box-shadow: inset 0 0 0 2px #fff, inset 0 0 0 3px #555; }
.wbtns .wclose { width: 46px; border: 0; background: linear-gradient(#e8a08c, #d0644c 50%, #bc2c14 51%, #d86040); }
.wbtns .wclose svg { width: 12px; height: 10px; }
.pbody { flex: 1; min-height: 0; border: 1px solid #55624a; border-bottom: 0; background: #fff; display: flex; flex-direction: column; }
.ptools { flex: none; height: 54px; background: #f0f0f0; display: flex; align-items: center; padding-left: 11px; overflow: hidden; font: 11px/14px "Liberation Sans", Arial, sans-serif; }
.field { flex: none; display: flex; flex-direction: column; gap: 5px; padding-bottom: 4px; }
.app-field { width: 224px; }
.speed { width: 149px; margin-left: 14px; }
.selwrap { position: relative; height: 21px; }
.selwrap::after { content: ""; position: absolute; right: 5px; top: 8px; border: 4px solid transparent; border-top-color: #000; border-bottom: 0; }
.selwrap.off::after { border-top-color: #888; }
select { appearance: none; display: block; width: 100%; height: 21px; padding: 0 3px; border: 1px solid #707070; border-radius: 3px; background: linear-gradient(#f3f3f3, #ebebeb 50%, #dddddd 51%, #cfcfcf); font: inherit; color: #000; opacity: 1; }
.off select { background: #f2f2f2; border-color: #adb2b5; color: #757575; }
.pt { flex: none; }
.pt svg { width: 26px; height: 26px; }
.save { margin-left: 13px; } .save svg { width: 30px; height: 30px; }
.first { margin-left: 11px; } .first svg, .last svg { width: 28px; height: 26px; }
.next { margin-left: 18px; } .back { margin-left: 14px; } .last { margin-left: 18px; }
.flip { transform: scaleX(-1); }
.play { margin-left: 16px; } .play svg { width: 20px; height: 22px; }
.pause { margin-left: 24px; } .pause svg { width: 18px; height: 18px; }
.secs { flex: none; margin-left: 7px; width: 40px; height: 23px; line-height: 22px; padding-left: 6px; background: #fff; border: 1px solid #e1e6ee; }
.pcontent { flex: 1; min-height: 0; display: flex; }
.shot { flex: 1; padding-top: 140px; }
.shot svg { width: 100%; height: auto; font-family: Lato, "Noto Sans CJK SC", sans-serif; }
.s3 { font-size: 3px; } .s4 { font-size: 4px; } .s5 { font-size: 5px; } .s8 { font-size: 8px; }
.wide, .s8 { font-family: "Open Sans", "Noto Sans", sans-serif; }
.logo-t { font: italic bold 9px Lato, sans-serif; fill: #222; }
.mid { text-anchor: middle; }
.l { fill: #8c8c8c; } .d { fill: #484848; } .b { fill: #3d9cc8; }
.details { width: 199px; flex: none; border: 1px solid #828282; border-right: 0; border-bottom: 0; padding: 1px; font: 12px/15px "Liberation Serif", "Times New Roman", serif; }
dd { font-weight: bold; color: #cd853f; white-space: pre-wrap; }

.mark { position: absolute; border: 3px solid #e84a46; }
.m1 { left: 63px; top: 422px; width: 68px; height: 24px; }
.m2 { left: 665px; top: 53px; width: 76px; height: 72px; }
.m3 { left: 251px; top: 206px; width: 978px; height: 31px; }
.pointer { position: absolute; left: 330px; top: 233px; width: 100px; height: 120px; }
.badge { position: absolute; width: 24px; height: 24px; border-radius: 50%; background: #e84a46; color: #fff; text-align: center; font: 18px/24px "Noto Sans", sans-serif; box-shadow: 0 1px 3px rgba(0, 0, 0, .5); }
.b1 { left: 118px; top: 413px; } .b2 { left: 720px; top: 50px; } .b3 { left: 1211px; top: 195px; }
</style>
